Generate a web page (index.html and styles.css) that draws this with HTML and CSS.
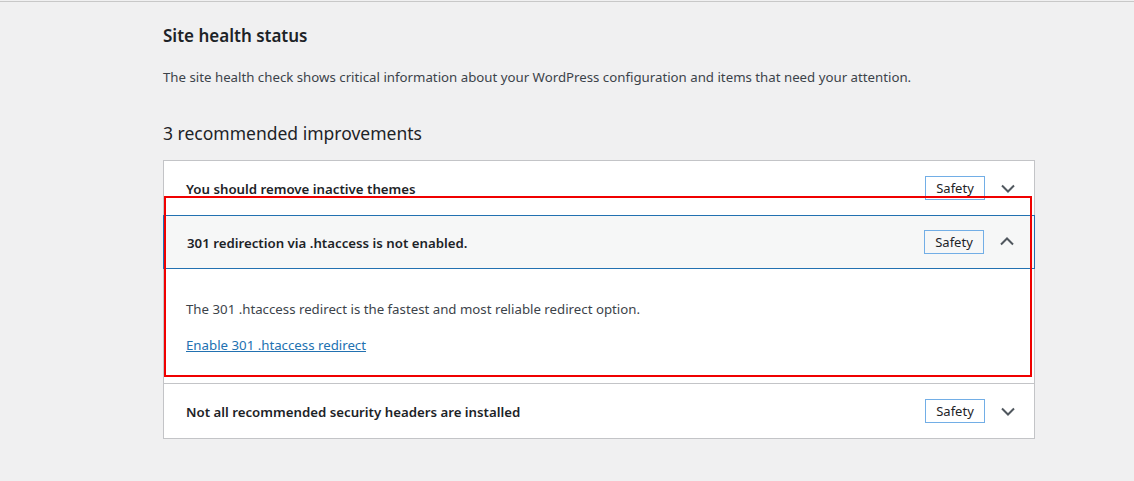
FILE: index.html
```html
<!DOCTYPE html>
<html lang="en">
<head>
    <meta charset="UTF-8" />
    <title>Site Health</title>
    <link rel="stylesheet" href="styles.css">
</head>
<body>
    <div class="topline"></div>
    <main class="health">
        <h2 class="health-title">Site health status</h2>
        <p class="health-intro">The site health check shows critical information about your WordPress configuration and items that need your attention.</p>
        <h3 class="health-count">3 recommended improvements</h3>

        <div class="issues">
            <div class="issue">
                <div class="issue-head">
                    <span class="issue-label">You should remove inactive themes</span>
                    <span class="badge">Safety</span>
                    <svg class="chevron" viewBox="0 0 16 16"><path d="M2 5.5 8 11.5l6-6"/></svg>
                </div>
            </div>
            <div class="issue open">
                <div class="issue-head">
                    <span class="issue-label">301 redirection via .htaccess is not enabled.</span>
                    <span class="badge">Safety</span>
                    <svg class="chevron" viewBox="0 0 16 16"><path d="M2 10.5 8 4.5l6 6"/></svg>
                </div>
                <div class="issue-body">
                    <p>The 301 .htaccess redirect is the fastest and most reliable redirect option.</p>
                    <p><a href="#">Enable 301 .htaccess redirect</a></p>
                </div>
            </div>
            <div class="issue">
                <div class="issue-head">
                    <span class="issue-label">Not all recommended security headers are installed</span>
                    <span class="badge">Safety</span>
                    <svg class="chevron" viewBox="0 0 16 16"><path d="M2 5.5 8 11.5l6-6"/></svg>
                </div>
            </div>
            <!-- highlight around the open item -->
            <div class="highlight"></div>
        </div>
    </main>
</body>
</html>
```

FILE: styles.css
```css
* {
    margin: 0;
    padding: 0;
    box-sizing: border-box;
}
body {
    background-color: #f0f0f1;
    font-family: "Noto Sans", "Open Sans", sans-serif;
    font-size: 13.25px;
    color: #1d2327;
    height: 100vh;
}
.topline {
    height: 2px;
    border-bottom: 1px solid #c8c8c8;
}
.health {
    margin-left: 163px;
    width: 872px;
}
.health-title {
    font-size: 17px;
    font-weight: 600;
    line-height: 24px;
    margin-top: 22px;
}
.health-intro {
    margin-top: 19px;
    line-height: 20px;
    color: #3c434a;
}
.health-count {
    font-size: 17.5px;
    font-weight: 400;
    line-height: 26px;
    margin-top: 33px;
}
.issues {
    position: relative;
    margin-top: 14px;
    background: #fff;
    border: 1px solid #c3c4c7;
}
.issue + .issue {
    border-top: 1px solid #c3c4c7;
}
.issue-head {
    height: 54px;
    display: flex;
    align-items: center;
    padding: 0 18px 0 22px;
}
.issue-label {
    flex: 1;
    font-size: 13.25px;
    font-weight: 600;
    padding-top: 2px;
}
.badge {
    width: 60px;
    height: 24px;
    border: 1px solid #72aee6;
    display: grid;
    place-items: center;
    font-size: 13px;
    font-weight: 400;
    margin-right: 15px;
}
.chevron {
    width: 16px;
    height: 16px;
    fill: none;
    stroke: #50575e;
    stroke-width: 2;
}
.issue.open {
    border-top: none;
}
.issue.open .issue-head {
    background: #f6f7f7;
    border: 1px solid #2271b1;
    margin: 0 -1px;
    padding-left: 23px;
    padding-right: 19px;
}
.issue-body {
    padding: 30px 22px 28px;
}
.issue-body p {
    line-height: 20px;
    color: #3c434a;
}
.issue-body p + p {
    margin-top: 16px;
}
.issue-body a {
    color: #2271b1;
}
.highlight {
    position: absolute;
    left: 0;
    top: 35px;
    width: 868px;
    height: 181px;
    border: 2px solid #f00000;
    pointer-events: none;
}
```
